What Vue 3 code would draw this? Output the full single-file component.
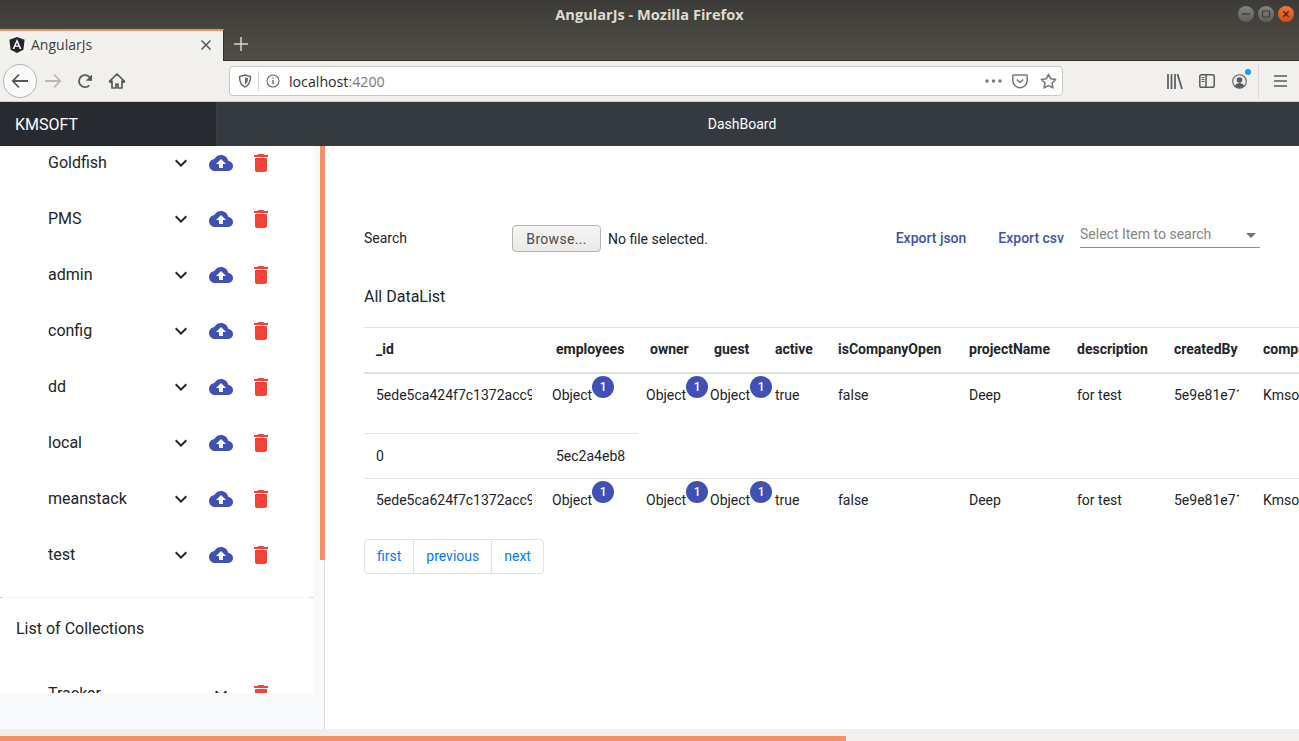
<script setup>
const dbs = ['Goldfish', 'PMS', 'admin', 'config', 'dd', 'local', 'meanstack', 'test']
const heads = ['_id', 'employees', 'owner', 'guest', 'active', 'isCompanyOpen', 'projectName', 'description', 'createdBy', 'company']
const widths = [180, 94, 64, 61, 63, 131, 108, 97, 89, 120]
const rows = [
  { id: '5ede5ca424f7c1372acc9a10', nested: true },
  { id: '5ede5ca624f7c1372acc9a11', nested: false }
]
</script>

<template>
  <div class="page">
    <header class="chrome">
      <div class="titlebar">
        <span class="title">AngularJs - Mozilla Firefox</span>
        <div class="winbtns">
          <span class="winbtn"><svg width="16" height="16" viewBox="0 0 16 16"><path d="M4 8h8" stroke="#3c3b37" stroke-width="1.3"/></svg></span>
          <span class="winbtn"><svg width="16" height="16" viewBox="0 0 16 16"><rect x="4.5" y="5" width="7" height="6" rx="0.8" fill="none" stroke="#3c3b37" stroke-width="1.2"/></svg></span>
          <span class="winbtn close"><svg width="16" height="16" viewBox="0 0 16 16"><path d="M5.3 5.3l5.4 5.4M10.7 5.3l-5.4 5.4" stroke="#3c2a20" stroke-width="1.3"/></svg></span>
        </div>
      </div>
      <div class="tabstrip">
        <div class="tab">
          <svg class="favicon" width="16" height="16" viewBox="0 0 16 16">
            <path d="M8 0l7.6 2.7-1.2 10L8 16l-6.4-3.3-1.2-10z" fill="#23272b"/>
            <path d="M8 2L3.6 12h1.7l.9-2.2h3.6l.9 2.2h1.7zM8 5.6l1.2 2.9H6.800z" fill="#fff"/>
          </svg>
          <span class="tabtext">AngularJs</span>
          <svg class="tabx" width="12" height="12" viewBox="0 0 12 12"><path d="M1.500 1.500l9 9M10.500 1.500l-9 9" stroke="#55565a" stroke-width="1.500"/></svg>
        </div>
        <svg class="plus" width="14" height="14" viewBox="0 0 14 14"><path d="M7 0v14M0 7h14" stroke="#d6d4cf" stroke-width="1.500"/></svg>
      </div>
      <div class="toolbar">
        <div class="backbtn">
          <svg width="18" height="18" viewBox="0 0 18 18"><path d="M8 2.500L1.800 9 8 15.500M2 9h15" fill="none" stroke="#55565a" stroke-width="1.800"/></svg>
        </div>
        <svg class="navico" width="18" height="18" viewBox="0 0 18 18"><path d="M10 2.500L16.200 9 10 15.500M16 9H1" fill="none" stroke="#b9b8b6" stroke-width="1.800"/></svg>
        <svg class="navico" width="16" height="16" viewBox="0 0 16 16"><path d="M14 7.500A6 6 0 1 0 12.300 12.300" fill="none" stroke="#5b5b5f" stroke-width="1.800"/><path d="M15 1.500v6.300H8.700z" fill="#5b5b5f"/></svg>
        <svg class="navico" width="18" height="18" viewBox="0 0 18 18"><path d="M9 2L1.500 9.300l1 1L4 9v7h4v-4h2v4h4V9l1.500 1.300 1-1z" fill="none" stroke="#5b5b5f" stroke-width="1.700" stroke-linejoin="round"/></svg>
        <div class="urlbar">
          <svg width="14" height="14" viewBox="0 0 14 14"><path d="M7 1l5.500 1.500c0 5-1 8.500-5.500 10.500C2.500 11 1.500 7.500 1.500 2.500z" fill="none" stroke="#6c6c70" stroke-width="1.500"/><path d="M7 3.500l3 .8c0 3-.6 4.800-3 6.200z" fill="#6c6c70"/></svg>
          <span class="urldiv"></span>
          <svg width="14" height="14" viewBox="0 0 14 14"><circle cx="7" cy="7" r="6" fill="none" stroke="#6c6c70" stroke-width="1.100"/><path d="M7 6v4.200M7 3.400v1.300" stroke="#6c6c70" stroke-width="1.400"/></svg>
          <span class="url">localhost<span class="port">:4200</span></span>
          <span class="urlspace"></span>
          <svg width="17" height="4" viewBox="0 0 17 4"><circle cx="2" cy="2" r="1.700" fill="#77777a"/><circle cx="8.500" cy="2" r="1.700" fill="#77777a"/><circle cx="15" cy="2" r="1.700" fill="#77777a"/></svg>
          <svg class="pocket" width="16" height="15" viewBox="0 0 16 15"><path d="M1.800 1h12.400a1 1 0 0 1 1 1v4.500a7.200 7.200 0 0 1-14.400 0V2a1 1 0 0 1 1-1z" fill="none" stroke="#77777a" stroke-width="1.500"/><path d="M4.800 5.500L8 8.500l3.200-3" fill="none" stroke="#77777a" stroke-width="1.600"/></svg>
          <svg class="star" width="17" height="16" viewBox="0 0 17 16"><path d="M8.500 1.300l2.200 4.500 4.900.7-3.500 3.500.8 4.900-4.400-2.300-4.400 2.300.8-4.900L1.400 6.500l4.900-.7z" fill="none" stroke="#77777a" stroke-width="1.600" stroke-linejoin="round"/></svg>
        </div>
        <div class="tools">
          <svg width="16" height="15" viewBox="0 0 16 15"><path d="M1 0v15M4.500 0v15M8 0v15M10.500 0l4.500 15" stroke="#5b5b5f" stroke-width="1.700" fill="none"/></svg>
          <svg width="16" height="14" viewBox="0 0 16 14"><rect x="0.800" y="0.800" width="14.400" height="12.400" rx="1.800" fill="none" stroke="#5b5b5f" stroke-width="1.500"/><path d="M7 1v12" stroke="#5b5b5f" stroke-width="1.500"/><path d="M2.500 3.500h3M2.500 5.500h3M2.500 7.500h3" stroke="#5b5b5f"/></svg>
          <span class="acct">
            <svg width="15" height="15" viewBox="0 0 15 15"><circle cx="7.500" cy="7.500" r="6.800" fill="none" stroke="#5b5b5f" stroke-width="1.100"/><circle cx="7.500" cy="6" r="2.800" fill="#5b5b5f"/><path d="M2.800 12c1-2.200 2.800-3 4.700-3s3.700.8 4.700 3a6.500 6.500 0 0 1-9.400 0z" fill="#5b5b5f"/></svg>
            <i class="dot"></i>
          </span>
          <span class="tooldiv"></span>
          <svg width="13" height="12" viewBox="0 0 13 12"><path d="M0 1h13M0 6h13M0 11h13" stroke="#5b5b5f" stroke-width="1.600"/></svg>
        </div>
      </div>
    </header>

    <nav class="navbar">
      <div class="brand">KMSOFT</div>
      <div class="navtitle">DashBoard</div>
    </nav>

    <div class="body">
      <aside class="aside">
        <div class="sideclip">
          <div class="panel first">
            <div v-for="db in dbs" :key="db" class="row">
              <span class="rowname">{{ db }}</span>
              <svg class="ic" width="24" height="24" viewBox="0 0 24 24"><path fill="#212529" d="M16.590 8.590L12 13.170 7.410 8.590 6 10l6 6 6-6z"/></svg>
              <svg class="ic" width="24" height="24" viewBox="0 0 24 24"><path fill="#3f51b5" d="M19.350 10.040C18.670 6.590 15.640 4 12 4 9.110 4 6.600 5.640 5.350 8.040 2.340 8.360 0 10.910 0 14c0 3.310 2.690 6 6 6h13c2.760 0 5-2.240 5-5 0-2.640-2.050-4.780-4.650-4.960zM14 13v4h-4v-4H7l5-5 5 5h-3z"/></svg>
              <svg class="ic" width="24" height="24" viewBox="0 0 24 24"><path fill="#f44336" d="M6 19c0 1.100.9 2 2 2h8c1.100 0 2-.9 2-2V7H6v12zM19 4h-3.500l-1-1h-5l-1 1H5v2h14V4z"/></svg>
            </div>
          </div>
          <div class="panel second">
            <div class="coltitle">List of Collections</div>
            <div class="row">
              <span class="rowname wide">Tracker</span>
              <svg class="ic" width="24" height="24" viewBox="0 0 24 24"><path fill="#212529" d="M16.590 8.590L12 13.170 7.410 8.590 6 10l6 6 6-6z"/></svg>
              <svg class="ic" width="24" height="24" viewBox="0 0 24 24"><path fill="#f44336" d="M6 19c0 1.100.9 2 2 2h8c1.100 0 2-.9 2-2V7H6v12zM19 4h-3.500l-1-1h-5l-1 1H5v2h14V4z"/></svg>
            </div>
          </div>
        </div>
        <div class="gutter"><div class="thumb"></div></div>
      </aside>

      <main class="main">
        <div class="searchrow">
          <span class="searchlabel">Search</span>
          <button class="browse" type="button">Browse...</button>
          <span class="nofile">No file selected.</span>
          <a class="export json">Export json</a>
          <a class="export">Export csv</a>
          <div class="select">
            <span>Select Item to search</span>
            <i class="caret"></i>
          </div>
        </div>
        <div class="listtitle">All DataList</div>
        <table class="grid">
          <colgroup>
            <col v-for="(w, i) in widths" :key="i" :style="{ width: w + 'px' }" />
          </colgroup>
          <thead>
            <tr><th v-for="h in heads" :key="h">{{ h }}</th></tr>
          </thead>
          <tbody v-for="r in rows" :key="r.id" :class="{ lastbody: !r.nested }">
            <tr class="datarow">
              <td><div class="clip">{{ r.id }}</div></td>
              <td v-for="n in 3" :key="n"><span class="obj">Object<b class="badge">1</b></span></td>
              <td>true</td>
              <td>false</td>
              <td>Deep</td>
              <td>for test</td>
              <td><div class="clip">5e9e81e71c2a4f</div></td>
              <td>Kmsoft</td>
            </tr>
            <tr v-if="r.nested" class="nested">
              <td class="line">0</td>
              <td class="line"><div class="clip">5ec2a4eb83f1a3c</div></td>
              <td colspan="8" class="blank"></td>
            </tr>
          </tbody>
        </table>
        <div class="pager">
          <a class="pg">first</a>
          <a class="pg">previous</a>
          <a class="pg">next</a>
        </div>
      </main>
    </div>

    <div class="hscroll"><div class="hthumb"></div></div>
  </div>
</template>

<style>
html, body { margin: 0; overflow: hidden; }
</style>

<style scoped>
* { box-sizing: border-box; }
.page {
  width: 1299px;
  height: 741px;
  display: flex;
  flex-direction: column;
  overflow: hidden;
  font-family: Roboto, "Liberation Sans", sans-serif;
  font-size: 14px;
  color: #212529;
  background: #fff;
}
.chrome { flex: none; background: linear-gradient(#3c3b37, #514e46 60px); }
.titlebar {
  height: 29px;
  display: flex;
  align-items: center;
  justify-content: center;
  position: relative;
}
.title {
  font-family: "Open Sans", "Noto Sans", sans-serif;
  font-weight: 700;
  font-size: 14.6px;
  color: #dfdbd2;
  margin-top: -1px;
}
.winbtns {
  position: absolute;
  top: 6px;
  right: 5px;
  display: flex;
  gap: 4px;
}
.winbtn {
  width: 16px;
  height: 16px;
  border-radius: 50%;
  background: linear-gradient(#85837d, #5f5d58);
  display: block;
}
.winbtn svg { display: block; }
.winbtn.close { background: linear-gradient(#f0733f, #dd4a14); }
.tabstrip {
  height: 32px;
  display: flex;
  align-items: center;
  border-bottom: 1px solid #2e2d2a;
}
.tab {
  width: 224px;
  height: 32px;
  background: #f3f1ee;
  border-top: 2px solid #f58c63;
  border-right: 1px solid #2e2d2a;
  display: flex;
  align-items: center;
  padding-left: 9px;
}
.favicon { flex: none; margin-top: -1px; }
.tabtext {
  margin-left: 6px;
  margin-top: -2px;
  font-family: "Open Sans", "Noto Sans", sans-serif;
  font-size: 14px;
  color: #3e4046;
}
.tabx { margin-left: auto; margin-right: 11px; margin-top: -1px; }
.plus { margin-left: 10px; margin-top: -2px; }
.toolbar {
  height: 41px;
  background: #f2f0ed;
  border-bottom: 1px solid #cfcdca;
  display: flex;
  align-items: center;
  padding-left: 3px;
}
.backbtn {
  width: 34px;
  height: 34px;
  border-radius: 50%;
  background: #fbfafa;
  border: 1px solid #b5b3b0;
  display: flex;
  align-items: center;
  justify-content: center;
  flex: none;
  margin-right: 7px;
}
.navico { flex: none; margin-right: 15px; }
.urlbar {
  width: 834px;
  height: 30px;
  margin-left: 88px;
  background: #fff;
  border: 1px solid #c9c7c4;
  border-radius: 4px;
  display: flex;
  align-items: center;
  padding: 0 5px 0 8px;
  flex: none;
}
.urldiv { width: 1px; height: 20px; background: #d4d2cf; margin: 0 7px 0 6px; }
.url {
  margin-left: 9px;
  font-family: "Open Sans", "Noto Sans", sans-serif;
  font-size: 14.2px;
  color: #2a2a2e;
}
.port { color: #7a7a7c; }
.urlspace { flex: 1; }
.pocket { margin-left: 10px; }
.star { margin-left: 12px; }
.tools {
  flex: none;
  display: flex;
  align-items: center;
  margin-left: 104px;
}
.tools > svg:nth-child(2) { margin-left: 16px; }
.acct { position: relative; display: block; height: 15px; margin-left: 17px; }
.acct svg { display: block; }
.dot {
  position: absolute;
  top: -5px;
  right: -4px;
  width: 6px;
  height: 6px;
  border-radius: 50%;
  background: #0a9dfb;
}
.tooldiv { width: 1px; height: 34px; background: #dad8d5; margin: 0 15px 0 11px; }
.navbar {
  flex: none;
  height: 44px;
  display: flex;
  background: #343a40;
  color: #fff;
}
.brand {
  width: 217px;
  background: #272b30;
  border-right: 1px solid #3a3f47;
  padding-left: 15px;
  font-size: 16px;
  display: flex;
  align-items: center;
}
.navtitle {
  flex: 1;
  display: flex;
  align-items: center;
  justify-content: center;
  padding-right: 32px;
}
.body { flex: 1; min-height: 0; display: flex; }
.aside {
  flex: none;
  width: 325px;
  display: flex;
  background: #f8f9fa;
}
.sideclip {
  width: 313px;
  height: 547px;
  margin-right: 7px;
  background: #fff;
  overflow: hidden;
  flex: none;
}
.panel.first { margin-top: -11px; padding-bottom: 14px; }
.panel.second { position: relative; border-top: 1px solid #f3f3f3; }
.panel.second::before,
.panel.second::after {
  content: "";
  position: absolute;
  top: -1px;
  width: 2px;
  height: 1px;
  background: #c9c9c9;
}
.panel.second::before { left: 0; }
.panel.second::after { right: 0; }
.row {
  height: 56px;
  display: flex;
  align-items: center;
  gap: 16px;
  padding-left: 48px;
  font-size: 16px;
}
.rowname { width: 105px; margin-top: -2px; }
.rowname.wide { width: 145px; }
.ic { flex: none; }
.coltitle {
  height: 68px;
  padding: 21px 0 0 16px;
  font-size: 16px;
  line-height: 19px;
}
.gutter {
  position: relative;
  width: 5px;
  flex: none;
  border-right: 1px solid #d8dadc;
}
.thumb {
  position: absolute;
  top: 0;
  left: 0;
  width: 5px;
  height: 414px;
  background: #f69068;
}
.main {
  flex: 1;
  min-width: 0;
  overflow: hidden;
  padding: 79px 0 0 39px;
}
.searchrow {
  display: flex;
  align-items: center;
  height: 27px;
  padding-right: 39px;
}
.searchlabel { width: 148px; margin-top: -2px; }
.browse {
  width: 89px;
  height: 27px;
  padding: 0;
  background: linear-gradient(#f6f5f4, #eae9e7);
  border: 1px solid #b4b3b0;
  border-radius: 4px;
  font-family: Roboto, sans-serif;
  font-size: 14px;
  letter-spacing: 0.3px;
  color: #4b4b4b;
}
.nofile { margin-left: 7px; }
.export {
  color: #3f51b5;
  font-weight: 500;
  margin-top: -2px;
  margin-left: 32px;
}
.export.json { margin-left: auto; }
.select {
  width: 180px;
  height: 27px;
  margin-left: 16px;
  margin-top: -8px;
  border-bottom: 1px solid #8c8c8c;
  color: #858585;
  display: flex;
  justify-content: space-between;
  align-items: center;
  padding-right: 4px;
}
.caret {
  width: 0;
  height: 0;
  border-left: 5px solid transparent;
  border-right: 5px solid transparent;
  border-top: 5px solid #757575;
  margin-top: 2px;
}
.listtitle {
  margin-top: 35px;
  font-size: 16px;
  line-height: 19px;
}
.grid {
  margin-top: 21px;
  table-layout: fixed;
  width: 1007px;
  border-collapse: collapse;
}
th {
  height: 45px;
  padding: 0 12px 2px;
  text-align: left;
  font-weight: 700;
  border-top: 1px solid #dee2e6;
  border-bottom: 2px solid #dee2e6;
  white-space: nowrap;
  overflow: hidden;
}
td {
  padding: 11px 12px 0;
  line-height: 21px;
  vertical-align: top;
  white-space: nowrap;
}
.datarow td { height: 61px; border-top: 1px solid #dee2e6; }
thead + tbody .datarow td { border-top: 0; }
.lastbody .datarow td { height: 44px; padding-top: 11px; }
.nested td { height: 45px; padding-top: 12px; }
.nested td.line { border-top: 1px solid #dee2e6; }
.clip { overflow: hidden; }
.obj { position: relative; margin-left: -4px; display: inline-block; }
.badge {
  position: absolute;
  left: 100%;
  top: -9px;
  width: 22px;
  height: 22px;
  border-radius: 50%;
  background: #3f51b5;
  color: #fff;
  font-size: 12px;
  font-weight: 500;
  line-height: 22px;
  text-align: center;
}
.pager {
  display: inline-flex;
  margin-top: 16px;
  border: 1px solid #dee2e6;
  border-radius: 4px;
  height: 35px;
}
.pg {
  padding: 0 12px;
  color: #007bff;
  display: flex;
  align-items: center;
  border-left: 1px solid #dee2e6;
}
.pg:first-child { border-left: 0; }
.hscroll {
  flex: none;
  height: 12px;
  background: #f2f0ed;
  padding-top: 7px;
}
.hthumb { width: 846px; height: 5px; background: #f69068; }
</style>
